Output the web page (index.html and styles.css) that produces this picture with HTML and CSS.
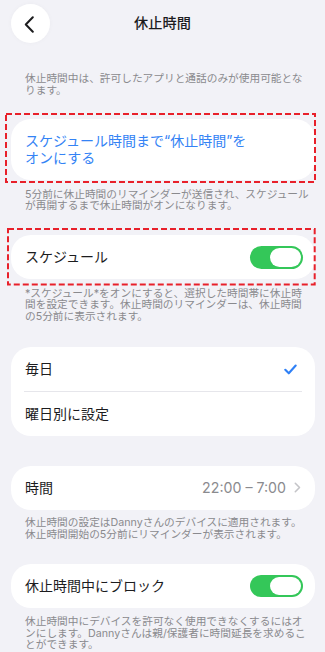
FILE: index.html
```html
<!DOCTYPE html>
<html lang="ja">
<head>
<meta charset="utf-8">
<title>休止時間</title>
<link rel="stylesheet" href="styles.css">
</head>
<body>
<div class="screen">
  <header class="nav">
    <button class="back" aria-label="戻る">
      <svg width="11" height="17" viewBox="0 0 11 17"><path d="M8.8 1.2 L1.8 8.5 L8.8 15.8" fill="none" stroke="#1c1c1e" stroke-width="2" stroke-linecap="round" stroke-linejoin="round"/></svg>
    </button>
    <h1 class="title">休止時間</h1>
    <span></span>
  </header>

  <p class="note note-top">休止時間中は、許可したアプリと通話のみが使用可能とな<br>ります。</p>

  <div class="card card-1">
    <div class="row-link">スケジュール時間まで“休止時間”を<br>オンにする</div>
    <svg class="mark mark-1"><rect class="mark-rect"/></svg>
  </div>
  <p class="note">5分前に休止時間のリマインダーが送信され、スケジュール<br>が再開するまで休止時間がオンになります。</p>

  <div class="card card-2">
    <div class="row">
      <span>スケジュール</span>
      <span class="toggle"><span class="knob"></span></span>
    </div>
    <svg class="mark mark-2"><rect class="mark-rect"/></svg>
  </div>
  <p class="note">*スケジュール*をオンにすると、選択した時間帯に休止時<br>間を設定できます。休止時間のリマインダーは、休止時間<br>の5分前に表示されます。</p>

  <div class="card card-3">
    <div class="row">
      <span>毎日</span>
      <svg class="check" width="13" height="11" viewBox="0 0 13 11"><path d="M1.3 5.8 L4.8 9.3 L11.7 1.5" fill="none" stroke="#2f80f6" stroke-width="2.1" stroke-linecap="round" stroke-linejoin="round"/></svg>
    </div>
    <div class="sep"></div>
    <div class="row">
      <span>曜日別に設定</span>
    </div>
  </div>

  <div class="card card-4">
    <div class="row">
      <span>時間</span>
      <span class="value">22:00 – 7:00
        <svg class="chev" width="7" height="11" viewBox="0 0 7 11"><path d="M1.3 1.3 L5.5 5.5 L1.3 9.7" fill="none" stroke="#c4c4c8" stroke-width="1.6" stroke-linecap="round" stroke-linejoin="round"/></svg>
      </span>
    </div>
  </div>
  <p class="note note-5">休止時間の設定はDannyさんのデバイスに適用されます。<br>休止時間開始の5分前にリマインダーが表示されます。</p>

  <div class="card card-5">
    <div class="row">
      <span>休止時間中にブロック</span>
      <span class="toggle"><span class="knob"></span></span>
    </div>
  </div>
  <p class="note">休止時間中にデバイスを許可なく使用できなくするにはオ<br>ンにします。Dannyさんは親/保護者に時間延長を求めるこ<br>とができます。</p>
</div>
</body>
</html>
```

FILE: styles.css
```css
* {
  box-sizing: border-box;
  margin: 0;
  padding: 0;
}

html, body {
  background: #f2f2f7;
}

body {
  width: 325px;
  height: 652px;
  overflow: hidden;
  font-family: "Inter", "Noto Sans CJK JP", sans-serif;
  color: #1c1c1e;
}

.screen {
  display: flex;
  flex-direction: column;
}

.nav {
  display: grid;
  grid-template-columns: 1fr auto 1fr;
  align-items: center;
  height: 39.5px;
  margin-top: 3.3px;
}

.back {
  width: 39px;
  height: 39px;
  margin-left: 10.5px;
  border: none;
  border-radius: 50%;
  background: #ffffff;
  box-shadow: 0 0 5px rgba(0, 0, 0, 0.03);
  display: flex;
  align-items: center;
  justify-content: center;
  padding-right: 2px;
  padding-top: 2px;
}

.title {
  font-size: 14.2px;
  font-weight: 500;
  line-height: 1;
  color: #1c1c1e;
}

.note {
  font-size: 10.7px;
  line-height: 11.5px;
  color: #8a8a8e;
  padding: 0 10px 0 25px;
  margin-top: 8.5px;
}

.note-top {
  margin-top: 30.5px;
}

.note-5 {
  margin-top: 7.5px;
}

.card {
  position: relative;
  margin: 23.5px 10px 0 11px;
  background: #ffffff;
  border-radius: 20px;
}

.card-1 {
  margin-top: 22.7px;
}

.card-3 {
  margin-top: 24.8px;
}

.card-4 {
  margin-top: 29.7px;
}

.row-link {
  padding: 14.5px 14px 13.5px;
  font-size: 14px;
  line-height: 16.7px;
  color: #3483f5;
}

.row {
  display: flex;
  align-items: center;
  justify-content: space-between;
  height: 44px;
  padding: 0 12px 0 14px;
  font-size: 14px;
  line-height: 1;
}

.sep {
  height: 1px;
  margin: 0 13px 0 13px;
  background: #e6e6eb;
}

.check {
  margin-right: 6px;
}

.value {
  display: flex;
  align-items: center;
  gap: 8px;
  color: #8a8a8e;
  font-size: 14.2px;
  margin-right: 2px;
}

.toggle {
  display: flex;
  justify-content: flex-end;
  align-items: center;
  width: 53px;
  height: 22.5px;
  padding: 2px;
  border-radius: 12px;
  background: #34c759;
}

.knob {
  width: 31px;
  height: 18.5px;
  border-radius: 10px;
  background: #ffffff;
}

/* red dashed annotation frames drawn over the cards */
.mark {
  position: absolute;
  overflow: visible;
  pointer-events: none;
}

.mark-rect {
  x: 1px;
  y: 1px;
  width: calc(100% - 2px);
  height: calc(100% - 2px);
  fill: none;
  stroke: #e8202a;
  stroke-width: 2;
  stroke-dasharray: 6 3;
}

.mark-1 {
  left: -6px;
  right: -1px;
  top: -6.3px;
  bottom: -2.3px;
  width: calc(100% + 7px);
  height: calc(100% + 8.6px);
}

.mark-2 {
  left: -3.7px;
  right: -1px;
  top: -7.7px;
  bottom: -5.7px;
  width: calc(100% + 4.7px);
  height: calc(100% + 13.4px);
}
```
